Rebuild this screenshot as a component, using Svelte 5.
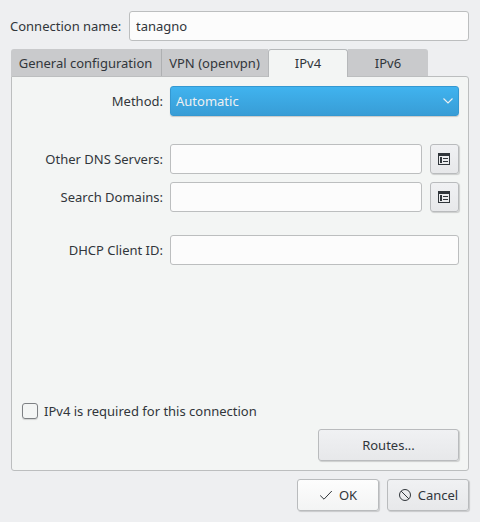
<script lang="ts">
  let connectionName = $state('tanagno');
  let dnsServers = $state('');
  let searchDomains = $state('');
  let dhcpClientId = $state('');
  let required = $state(false);

  const tabs = [
    { id: 'general', label: 'General configuration' },
    { id: 'vpn', label: 'VPN (openvpn)' },
    { id: 'ipv4', label: 'IPv4' },
    { id: 'ipv6', label: 'IPv6' }
  ];
  let activeTab = $state('ipv4');
</script>

{#snippet listIcon()}
  <svg width="12" height="12" viewBox="0 0 12 12" shape-rendering="crispEdges" aria-hidden="true">
    <path
      fill="#31363b"
      fill-rule="evenodd"
      d="M0 0h12v12H0zM1 3v8h10V3zM2 4h2v6H2zM5 5h5v1H5zM5 8h5v1H5z"
    />
  </svg>
{/snippet}

<div class="dialog">
  <div class="name-row">
    <label for="name">Connection name:</label>
    <input id="name" class="field" spellcheck="false" bind:value={connectionName} />
  </div>

  <div class="tabs" role="tablist">
    {#each tabs as tab (tab.id)}
      <button
        class="tab {tab.id}"
        class:active={activeTab === tab.id}
        role="tab"
        aria-selected={activeTab === tab.id}
        onclick={() => (activeTab = tab.id)}>{tab.label}</button
      >
    {/each}
  </div>

  <div class="panel">
    <div class="row method">
      <span class="label">Method:</span>
      <button class="combo">
        <span>Automatic</span>
        <svg width="12" height="8" viewBox="0 0 12 8" aria-hidden="true">
          <path d="M1.500 1.500L6 6l4.500-4.500" fill="none" stroke="#eff0f1" stroke-width="1.100" />
        </svg>
      </button>
    </div>

    <div class="row dns">
      <label class="label" for="dns">Other DNS Servers:</label>
      <input id="dns" class="field" bind:value={dnsServers} />
      <button class="btn edit" aria-label="Edit DNS servers">{@render listIcon()}</button>
    </div>

    <div class="row search">
      <label class="label" for="search">Search Domains:</label>
      <input id="search" class="field" bind:value={searchDomains} />
      <button class="btn edit" aria-label="Edit search domains">{@render listIcon()}</button>
    </div>

    <div class="row dhcp">
      <label class="label" for="dhcp">DHCP Client ID:</label>
      <input id="dhcp" class="field" bind:value={dhcpClientId} />
    </div>

    <label class="check">
      <input type="checkbox" bind:checked={required} />
      IPv4 is required for this connection
    </label>

    <button class="btn routes">Routes...</button>
  </div>

  <div class="actions">
    <button class="btn ok">
      <svg width="14" height="14" viewBox="0 0 14 14" aria-hidden="true">
        <path d="M1.200 7.500L5 11.200 12.800 3" fill="none" stroke="#31363b" />
      </svg>
      OK
    </button>
    <button class="btn cancel">
      <svg width="14" height="14" viewBox="0 0 14 14" aria-hidden="true">
        <circle cx="7" cy="7" r="5.500" fill="none" stroke="#31363b" />
        <path d="M3.100 3.100l7.800 7.800" stroke="#31363b" />
      </svg>
      Cancel
    </button>
  </div>
</div>

<style>
  :global(body) {
    background: #eeeff1;
  }

  .dialog {
    box-sizing: border-box;
    display: flex;
    flex-direction: column;
    width: 480px;
    height: 522px;
    padding: 11px;
    background: #eeeff1;
    color: #31363b;
    font-family: "Noto Sans", sans-serif;
    font-size: 13px;
    line-height: 18px;
    white-space: nowrap;
  }

  button,
  input {
    box-sizing: border-box;
    margin: 0;
    padding: 0;
    font: inherit;
    color: inherit;
  }

  .name-row {
    display: flex;
    align-items: center;
    height: 30px;
    margin-left: -1px;
  }

  .name-row label {
    width: 119px;
  }

  .field {
    flex: 1;
    min-width: 0;
    height: 30px;
    padding: 0 6px;
    border: 1px solid #bcbebf;
    border-radius: 3px;
    background: #fcfcfc;
    outline: none;
  }

  .tabs {
    position: relative;
    z-index: 1;
    display: flex;
    height: 28px;
    margin-top: 8px;
    margin-bottom: -1px;
  }

  .tab {
    height: 27px;
    border: 0;
    background: #c9cacc;
    text-align: center;
  }

  .tab.general {
    width: 151px;
    padding-right: 1px;
    border-right: 1px solid #aeb0b2;
    border-top-left-radius: 3px;
  }

  .tab.vpn {
    width: 106px;
    padding-right: 1px;
  }

  .tab.ipv4,
  .tab.ipv6 {
    width: 80px;
  }

  .tab.ipv6 {
    border-top-right-radius: 3px;
  }

  .tab.active {
    height: 28px;
    padding-bottom: 2px;
    border: 1px solid #b6b8ba;
    border-bottom: 0;
    border-radius: 3px 3px 0 0;
    background: #f3f5f4;
  }

  .panel {
    box-sizing: border-box;
    display: flex;
    flex-direction: column;
    width: 458px;
    height: 395px;
    padding: 9px;
    border: 1px solid #bcbebf;
    border-radius: 0 3px 3px 3px;
    background: #f3f5f4;
  }

  .row {
    display: flex;
    align-items: center;
    height: 30px;
  }

  .label {
    width: 142px;
    margin-right: 7px;
    text-align: right;
  }

  .dns {
    margin-top: 28px;
  }

  .search {
    margin-top: 8px;
  }

  .dhcp {
    margin-top: 23px;
  }

  .combo {
    display: flex;
    flex: 1;
    align-items: center;
    justify-content: space-between;
    height: 30px;
    padding: 0 4px 0 5px;
    border: 1px solid #3498d1;
    border-radius: 3px;
    background: linear-gradient(#40b3ef, #389dd6);
    box-shadow: 0 1px 1px rgba(0, 0, 0, 0.18);
    color: #eff0f1;
  }

  .btn {
    display: flex;
    align-items: center;
    justify-content: center;
    border: 1px solid #b9bbbd;
    border-radius: 3px;
    background: linear-gradient(#f0f1f3, #e7e8ea);
    box-shadow: 1px 1px 1px rgba(0, 0, 0, 0.16);
  }

  .edit {
    width: 29px;
    height: 30px;
    margin-left: 8px;
    padding-right: 1px;
  }

  .check {
    display: flex;
    align-items: center;
    gap: 6px;
    height: 18px;
    margin-top: 137px;
    margin-left: 1px;
  }

  .check input {
    width: 16px;
    height: 16px;
    appearance: none;
    border: 1px solid #7d8083;
    border-radius: 3px;
    box-shadow: 0 1px 1px rgba(0, 0, 0, 0.14);
  }

  .check input:checked {
    background: #3daee9;
  }

  .routes {
    align-self: flex-end;
    width: 141px;
    height: 32px;
    margin-top: 9px;
  }

  .actions {
    display: flex;
    justify-content: flex-end;
    gap: 8px;
    margin-top: 8px;
  }

  .actions .btn {
    gap: 6px;
    width: 82px;
    height: 32px;
  }

  .actions .ok {
    background: linear-gradient(#fdfdfd, #f3f4f4);
  }
</style>
